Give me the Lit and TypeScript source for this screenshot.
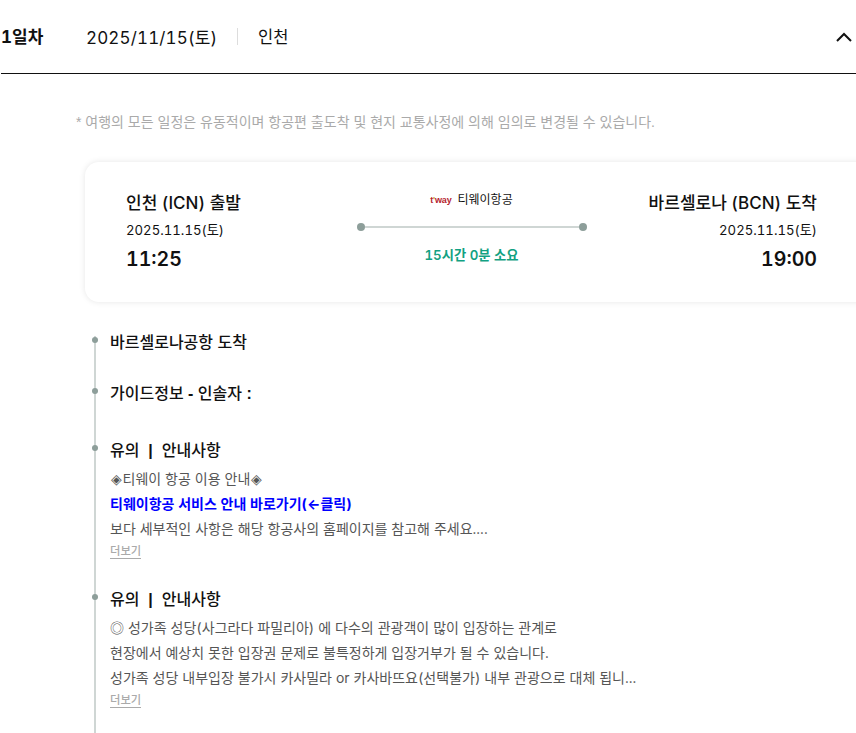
import { LitElement, html, css } from "lit";
import { customElement } from "lit/decorators.js";

@customElement("app-root")
export class AppRoot extends LitElement {
  static styles = css`
    :host { display: block; width: 856px; height: 733px; overflow: hidden; background: #fff; color: #111;
      font-family: Inter, "Noto Sans CJK KR", sans-serif; font-variant-numeric: tabular-nums; }
    * { box-sizing: border-box; }
    .head { display: flex; align-items: center; height: 74px; margin-left: 1px; border-bottom: 1px solid #111; }
    .day { width: 85px; font-size: 17px; font-weight: 700; margin-top: -2px; }
    .date { font-size: 17px; letter-spacing: .15px; width: 131px; white-space: nowrap; margin-top: -1px; }
    .sep { width: 1px; height: 17px; background: #ddd; margin: 0 20px; }
    .city { font-size: 16.5px; margin-top: -1px; }
    .chev { margin-left: auto; margin-right: 4px; display: block; }
    .note { margin: 39px 0 0 76px; font-family: "Liberation Sans", "Noto Sans CJK KR", sans-serif; font-size: 14px; line-height: 18px; color: #aaa; }
    .card { display: flex; margin: 31px 0 0 85px; width: 791px; height: 140px; padding: 29px 59px 0 41px;
      background: #fff; border-radius: 14px; box-shadow: 0 0 6px rgba(0,0,0,.1); }
    .end { flex: 1; display: flex; flex-direction: column; }
    .end.r { align-items: flex-end; }
    .name { font-size: 17px; font-weight: 500; line-height: 24px; white-space: nowrap; }
    .d { font-size: 13.2px; line-height: 20px; margin-top: 5px; }
    .t { font-size: 19.6px; font-weight: 600; line-height: 26px; margin-top: 6px; }
    .mid { width: 230px; flex: none; display: flex; flex-direction: column; align-items: center; margin-top: 1px; }
    .air { display: flex; align-items: center; gap: 6px; font-size: 12px; line-height: 16px; }
    .tway { font-family: "Liberation Sans", sans-serif; font-size: 9px; letter-spacing: -.2px; font-weight: 700; color: #b5232e; }
    .tway i { font-style: normal; color: #c9a227; }
    .track { display: flex; align-items: center; width: 230px; margin-top: 15px; }
    .dot { width: 8px; height: 8px; border-radius: 50%; background: #8d9e9a; flex: none; }
    .bar { flex: 1; height: 2px; background: #cfd6d4; }
    .dur { font-size: 13.3px; font-weight: 600; color: #12a182; line-height: 18px; margin-top: 15px; }
    .tl { position: relative; margin: 28px 0 0 94px; padding-left: 16px; }
    .tl::before { content: ""; position: absolute; left: 0; top: 6px; bottom: -60px; width: 2px; background: #cfd6d4; }
    .item { position: relative; padding-bottom: 27px; }
    .item.short { padding-bottom: 26px; }
    .item.gap { padding-bottom: 32px; }
    .item.wide { padding-bottom: 28px; }
    .item::before { content: ""; position: absolute; left: -18px; top: 7px; width: 6px; height: 6px; border-radius: 50%; background: #8d9e9a; }
    h3 { margin: 0; padding-top: 1px; font-family: "Liberation Sans", "Noto Sans CJK KR", sans-serif; font-size: 16px; font-weight: 500; line-height: 24px; white-space: pre; }
    h3 b { font-weight: 700; }
    h3 + p { margin-top: 3px; }
    p { margin: 0; font-size: 14px; line-height: 25px; color: #555; white-space: nowrap; word-spacing: .2px; }
    p.link { color: #00f; font-weight: 700; word-spacing: 0; }
    .g { display: inline-block; width: 12.5px; text-align: center; }
    .more { display: block; width: fit-content; margin-top: 3px; font-size: 11.3px; font-weight: 500; line-height: 14px; color: #aaa; border-bottom: 1px solid #aaa; }
  `;

  render() {
    return html`
      <div class="head">
        <div class="day">1일차</div>
        <div class="date">2025/11/15(토)</div>
        <div class="sep"></div>
        <div class="city">인천</div>
        <svg class="chev" width="16" height="10" viewBox="0 0 16 10" fill="none" stroke="#111" stroke-width="2"><path d="M1 9 8 2l7 7"/></svg>
      </div>
      <div class="note">* 여행의 모든 일정은 유동적이며 항공편 출도착 및 현지 교통사정에 의해 임의로 변경될 수 있습니다.</div>
      <div class="card">
        <div class="end">
          <div class="name">인천 (ICN) 출발</div>
          <div class="d">2025.11.15(토)</div>
          <div class="t">11:25</div>
        </div>
        <div class="mid">
          <div class="air"><span class="tway">t<i>'</i>way</span>티웨이항공</div>
          <div class="track"><span class="dot"></span><span class="bar"></span><span class="dot"></span></div>
          <div class="dur">15시간 0분 소요</div>
        </div>
        <div class="end r">
          <div class="name">바르셀로나 (BCN) 도착</div>
          <div class="d">2025.11.15(토)</div>
          <div class="t">19:00</div>
        </div>
      </div>
      <div class="tl">
        <div class="item short"><h3>바르셀로나공항 도착</h3></div>
        <div class="item gap"><h3>가이드정보 <b>-</b> 인솔자 <b>:</b></h3></div>
        <div class="item wide">
          <h3>유의  <b>|</b>  안내사항</h3>
          <p><span class="g">◈</span>티웨이 항공 이용 안내<span class="g">◈</span></p>
          <p class="link">티웨이항공 서비스 안내 바로가기(←클릭)</p>
          <p>보다 세부적인 사항은 해당 항공사의 홈페이지를 참고해 주세요....</p>
          <span class="more">더보기</span>
        </div>
        <div class="item">
          <h3>유의  <b>|</b>  안내사항</h3>
          <p>◎ 성가족 성당(사그라다 파밀리아) 에 다수의 관광객이 많이 입장하는 관계로</p>
          <p>현장에서 예상치 못한 입장권 문제로 불특정하게 입장거부가 될 수 있습니다.</p>
          <p>성가족 성당 내부입장 불가시 카사밀라 or 카사바뜨요(선택불가) 내부 관광으로 대체 됩니...</p>
          <span class="more">더보기</span>
        </div>
      </div>
    `;
  }
}
